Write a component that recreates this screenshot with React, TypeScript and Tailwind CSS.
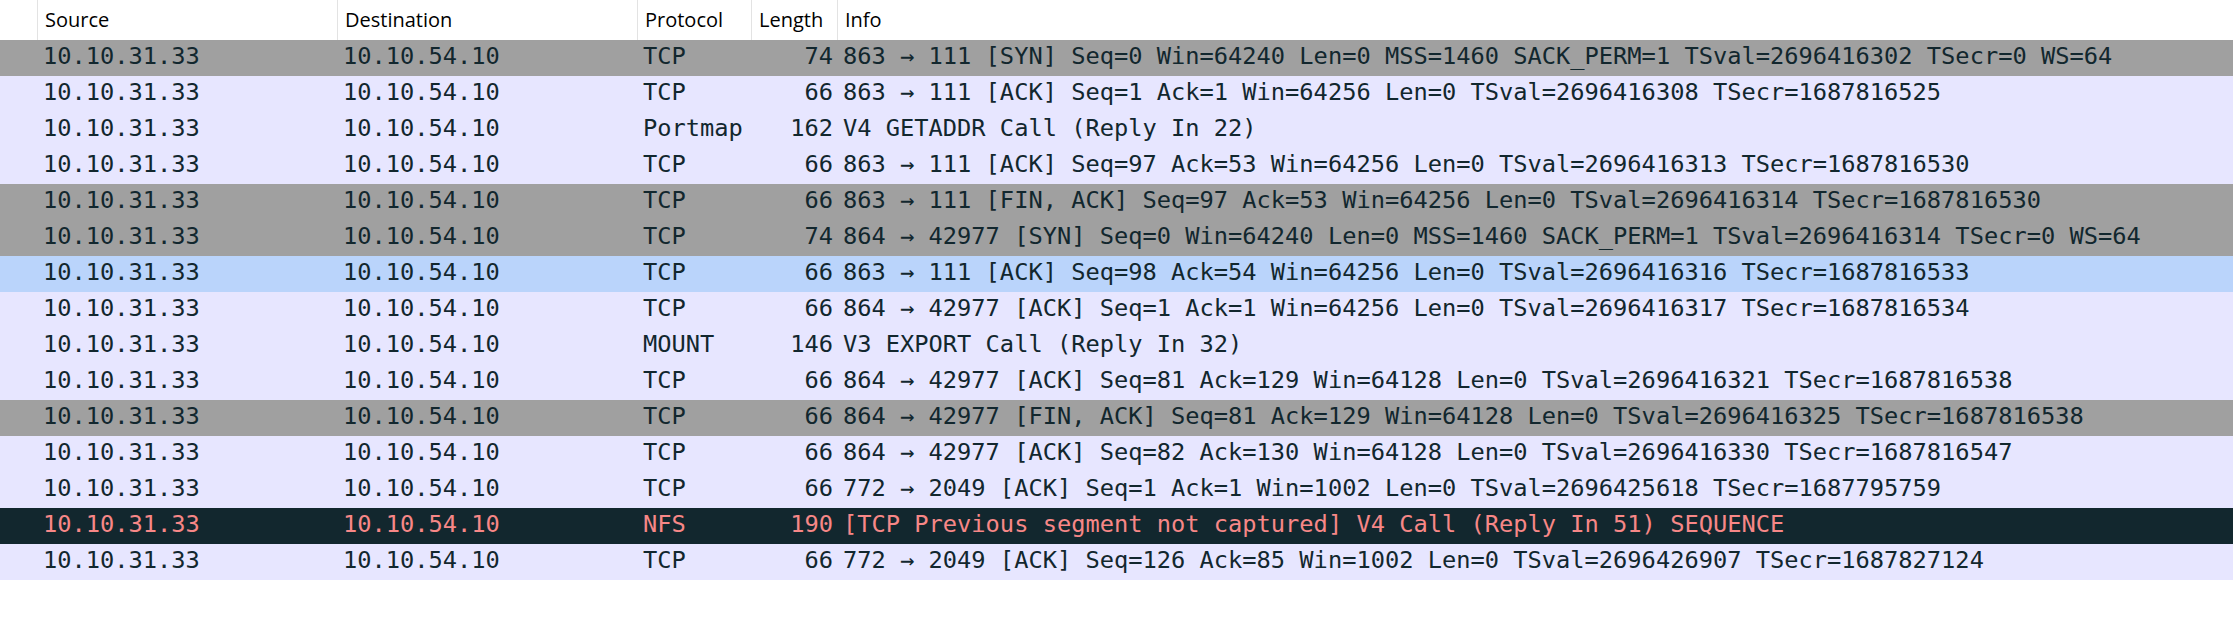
const GRID = "grid grid-cols-[38px_300px_300px_114px_86px_1fr]";

type Kind = "tcp" | "flag" | "sel" | "bad";

const ROW_STYLE: Record<Kind, string> = {
  tcp: "bg-[#e7e6ff] text-[#12272e]",
  flag: "bg-[#a0a0a0] text-[#12272e]",
  sel: "bg-[#bad4fb] text-[#12272e]",
  bad: "bg-[#12272e] text-[#f78787]",
};

const PACKETS: { proto: string; len: number; info: string; kind: Kind }[] = [
  { proto: "TCP", len: 74, info: "863 → 111 [SYN] Seq=0 Win=64240 Len=0 MSS=1460 SACK_PERM=1 TSval=2696416302 TSecr=0 WS=64", kind: "flag" },
  { proto: "TCP", len: 66, info: "863 → 111 [ACK] Seq=1 Ack=1 Win=64256 Len=0 TSval=2696416308 TSecr=1687816525", kind: "tcp" },
  { proto: "Portmap", len: 162, info: "V4 GETADDR Call (Reply In 22)", kind: "tcp" },
  { proto: "TCP", len: 66, info: "863 → 111 [ACK] Seq=97 Ack=53 Win=64256 Len=0 TSval=2696416313 TSecr=1687816530", kind: "tcp" },
  { proto: "TCP", len: 66, info: "863 → 111 [FIN, ACK] Seq=97 Ack=53 Win=64256 Len=0 TSval=2696416314 TSecr=1687816530", kind: "flag" },
  { proto: "TCP", len: 74, info: "864 → 42977 [SYN] Seq=0 Win=64240 Len=0 MSS=1460 SACK_PERM=1 TSval=2696416314 TSecr=0 WS=64", kind: "flag" },
  { proto: "TCP", len: 66, info: "863 → 111 [ACK] Seq=98 Ack=54 Win=64256 Len=0 TSval=2696416316 TSecr=1687816533", kind: "sel" },
  { proto: "TCP", len: 66, info: "864 → 42977 [ACK] Seq=1 Ack=1 Win=64256 Len=0 TSval=2696416317 TSecr=1687816534", kind: "tcp" },
  { proto: "MOUNT", len: 146, info: "V3 EXPORT Call (Reply In 32)", kind: "tcp" },
  { proto: "TCP", len: 66, info: "864 → 42977 [ACK] Seq=81 Ack=129 Win=64128 Len=0 TSval=2696416321 TSecr=1687816538", kind: "tcp" },
  { proto: "TCP", len: 66, info: "864 → 42977 [FIN, ACK] Seq=81 Ack=129 Win=64128 Len=0 TSval=2696416325 TSecr=1687816538", kind: "flag" },
  { proto: "TCP", len: 66, info: "864 → 42977 [ACK] Seq=82 Ack=130 Win=64128 Len=0 TSval=2696416330 TSecr=1687816547", kind: "tcp" },
  { proto: "TCP", len: 66, info: "772 → 2049 [ACK] Seq=1 Ack=1 Win=1002 Len=0 TSval=2696425618 TSecr=1687795759", kind: "tcp" },
  { proto: "NFS", len: 190, info: "[TCP Previous segment not captured] V4 Call (Reply In 51) SEQUENCE", kind: "bad" },
  { proto: "TCP", len: 66, info: "772 → 2049 [ACK] Seq=126 Ack=85 Win=1002 Len=0 TSval=2696426907 TSecr=1687827124", kind: "tcp" },
];

export default function App() {
  return (
    <div className="h-[640px] w-[2233px] overflow-hidden bg-white">
      {/* column header */}
      <div className={`${GRID} h-[40px] font-['Open_Sans',sans-serif] text-[20px] leading-[40px] text-black`}>
        <div className="border-r border-[#e3e3e3]" />
        <div className="border-r border-[#e3e3e3] px-[7px]">Source</div>
        <div className="border-r border-[#e3e3e3] px-[7px]">Destination</div>
        <div className="border-r border-[#e3e3e3] px-[7px]">Protocol</div>
        <div className="border-r border-[#e3e3e3] px-[7px]">Length</div>
        <div className="px-[7px]">Info</div>
      </div>

      {/* packet rows */}
      <div className="font-['DejaVu_Sans_Mono',monospace] text-[23.7px]">
        {PACKETS.map((p, i) => (
          <div key={i} className={`${GRID} h-[36px] whitespace-pre pb-[4px] leading-[32px] ${ROW_STYLE[p.kind]}`}>
            <div />
            <div className="px-[5px]">10.10.31.33</div>
            <div className="px-[5px]">10.10.54.10</div>
            <div className="px-[5px]">{p.proto}</div>
            <div className="px-[5px] text-right">{p.len}</div>
            <div className="px-[5px]">{p.info}</div>
          </div>
        ))}
      </div>
    </div>
  );
}
